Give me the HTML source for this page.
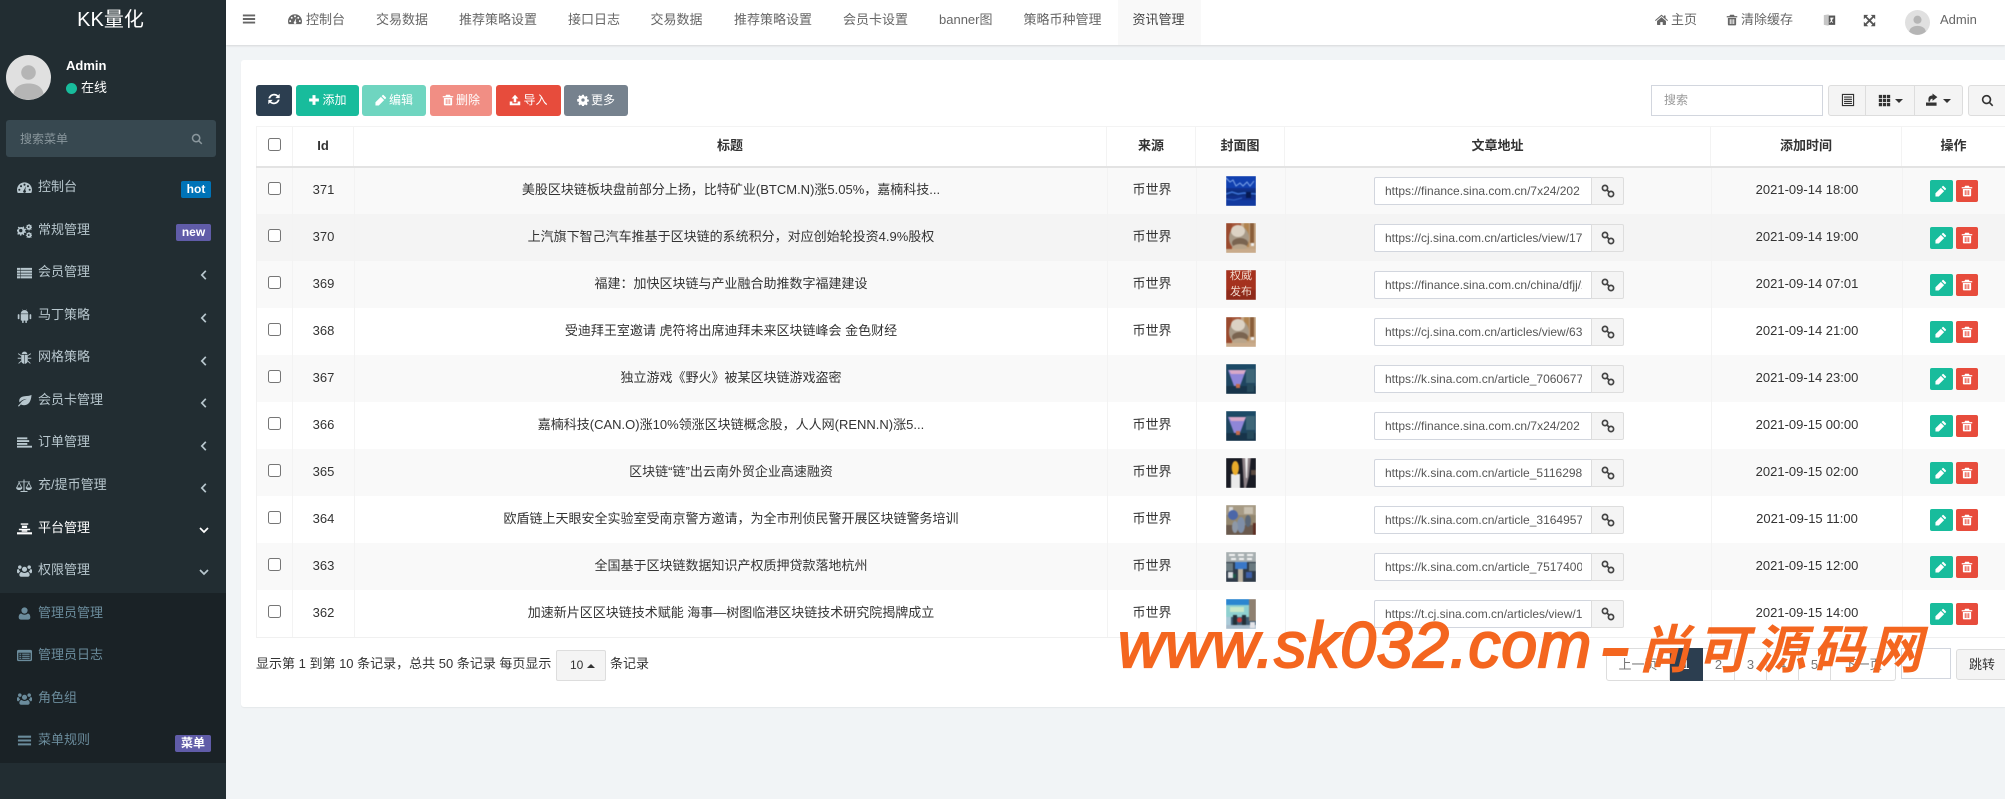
<!DOCTYPE html>
<html lang="zh"><head><meta charset="utf-8"><title>KK量化</title>
<style>
*{box-sizing:border-box}
html,body{margin:0;padding:0;width:2005px;height:799px;overflow:hidden;background:#f1f4f6}
body{font:13px/18px "Liberation Sans","Noto Sans CJK SC",sans-serif;color:#333;position:relative}
.a{position:absolute;white-space:nowrap}
svg{display:block;fill:currentColor}
#side{left:0;top:0;width:226px;height:799px;background:#222d32;color:#b8c7ce}
#sub{left:0;top:593px;width:226px;height:170px;background:#1a2226}
.m{left:38px;height:18px;line-height:18px;color:#b8c7ce}
.s{color:#6b8c9c}
.ic{width:15px;height:15px;left:16.5px;color:#b8c7ce}
.ic.s{color:#6b8c9c}
.ch{left:198px;width:12px;height:12px;color:#b8c7ce}
.bd{color:#fff;font-weight:bold;font-size:12px;text-align:center;border-radius:2px;height:17px;line-height:16px}
#top{left:226px;top:0;width:1779px;height:45px;background:#fff;box-shadow:0 1px 2px rgba(0,0,0,.12)}
.n{top:11px;color:#666;line-height:18px}
.ni{color:#666}
#panel{left:241px;top:60px;width:1764px;height:647px;background:#fff;border-radius:3px 0 0 3px;box-shadow:0 1px 1px rgba(0,0,0,.05)}
.b{top:85px;height:31px;border-radius:3px;color:#fff;font-size:12px;line-height:30px;text-align:center}
.b svg{display:inline-block;width:12px;height:12px;vertical-align:-2px;margin-right:2px}
.tg{top:85px;height:31px;background:#f4f4f4;border:1px solid #ddd;color:#333}
.r{position:absolute;left:256px;width:1749px;height:47px;border-left:1px solid #f1f1f1}
.c{position:absolute;top:0;height:47px;line-height:46px;text-align:center;white-space:nowrap;border-right:1px solid #f3f3f3}
.c1{left:0;width:36px}.c2{left:36px;width:62px}.c3{left:98px;width:753px}.c4{left:851px;width:89px}.c5{left:940px;width:89px}.c6{left:1029px;width:426px}.c7{left:1455px;width:191px}.c8{left:1646px;width:103px;border-right:0}
input[type=checkbox]{position:absolute;margin:0;left:11px;top:15px;width:13px;height:13px}
.th{position:absolute;left:969px;top:9px;width:30px;height:30px;overflow:hidden}
.th svg{filter:blur(.45px)}
.u{position:absolute;left:1117px;top:10px;width:218px;height:28px;border:1px solid #d2d6de;border-radius:2px 0 0 2px;background:#fff;font-size:12px;line-height:26px;color:#555;padding:0 10px;overflow:hidden;white-space:nowrap;text-align:left}
.u span{display:block;width:197px;overflow:hidden}
.l{position:absolute;left:1334px;top:10px;width:33px;height:28px;border:1px solid #ddd;border-radius:0 2px 2px 0;background:#f4f4f4;color:#444}
.l svg{position:absolute;left:9px;top:6px;width:14px;height:14px}
.e,.d{position:absolute;top:13px;height:22px;border-radius:2px;color:#fff}
.e{left:1673px;width:23px;background:#18bc9c}.d{left:1699px;width:22px;background:#e74c3c}
.e svg,.d svg{position:absolute;left:5px;top:5px;width:12px;height:12px}
.hd{position:absolute;top:127px;height:39px;line-height:38px;font-weight:bold;text-align:center;color:#333;white-space:nowrap;border-right:1px solid #f3f3f3}
.pg{top:648px;height:33px;line-height:31px;text-align:center;background:#fff;border:1px solid #ddd;border-left:0;color:#777}
.wm{color:#f4661f;font-style:italic;white-space:nowrap;position:absolute}
</style></head><body>
<svg width="0" height="0" style="position:absolute"><defs>
<symbol id="dash" viewBox="0 0 16 16"><path fill-rule="evenodd" d="M8 2.5C3.600 2.500 0 6 0 10.500c0 1.200.3 2.300.8 3.300h14.400c.5-1 .8-2.100.8-3.300C16 6 12.400 2.500 8 2.500zM2.500 9.300a1.100 1.100 0 1 1 0 2.200 1.100 1.100 0 0 1 0-2.200zM4.300 5.500a1.100 1.100 0 1 1 0 2.200 1.100 1.100 0 0 1 0-2.200zM8 3.900a1.100 1.100 0 1 1 0 2.200 1.100 1.100 0 0 1 0-2.200zM11.700 5.500a1.100 1.100 0 1 1 0 2.200 1.100 1.100 0 0 1 0-2.200zM13.500 9.300a1.100 1.100 0 1 1 0 2.200 1.100 1.100 0 0 1 0-2.200zM9.500 6.600l-.7 4.300a1.500 1.500 0 1 1-1.500 0z"/></symbol>
<symbol id="cogs" viewBox="0 0 16 16"><path fill-rule="evenodd" d="M4.800 4.300l1.100.3.700-1 1.200.7-.5 1.100.8.800 1.100-.4.600 1.300-1.100.6v1.100l1.100.6-.6 1.300-1.100-.4-.8.8.5 1.100-1.200.7-.7-1-1.100.3-.2 1.200H3.300l-.2-1.200-1-.4-1 .8-.9-1 .8-1-.4-1L0 8.400V7l1.200-.2.4-1-.8-1 1-1 1 .8zM4 6.300a1.800 1.800 0 1 0 0 3.600 1.800 1.800 0 0 0 0-3.600z"/><path fill-rule="evenodd" d="M12.500 1l.8.100.2.900.7.300.8-.5.6.6-.5.8.3.700.9.200v.9l-.9.2-.3.700.5.800-.6.600-.8-.5-.7.300-.2.900h-.9l-.2-.9-.7-.3-.8.5-.6-.6.5-.8-.3-.7-.9-.2v-.9l.9-.2.3-.7-.5-.8.6-.6.8.5.7-.3.2-.9zM12.500 3.300a1 1 0 1 0 0 2 1 1 0 0 0 0-2zM12.500 9.500l.8.100.2.900.7.300.8-.5.6.6-.5.8.3.700.9.200v.9l-.9.2-.3.700.5.800-.6.600-.8-.5-.7.300-.2.900h-.9l-.2-.9-.7-.3-.8.5-.6-.6.5-.8-.3-.7-.9-.2v-.9l.9-.2.3-.7-.5-.8.6-.6.8.5.7-.3.2-.9zM12.500 11.800a1 1 0 1 0 0 2 1 1 0 0 0 0-2z"/></symbol>
<symbol id="list" viewBox="0 0 16 16"><path d="M0 3h3.500v2.200H0zM4 3h12v2.200H4zM0 6h3.500v2.200H0zM4 6h12v2.200H4zM0 9h3.500v2.200H0zM4 9h12v2.200H4zM0 12h3.500v2.200H0zM4 12h12v2.200H4z"/></symbol>
<symbol id="android" viewBox="0 0 16 16"><path d="M4 6.500h8v6.200c0 .5-.3.8-.8.8h-.7v2c0 .4-.4.5-.8.500s-.8-.1-.8-.5v-2H7.100v2c0 .4-.4.5-.8.500s-.8-.1-.8-.5v-2h-.7c-.5 0-.8-.3-.8-.8zM4 6c0-1.500 1-2.700 2.300-3.300L5.600 1.500l.3-.2.8 1.200c.8-.3 1.800-.3 2.600 0l.8-1.200.3.200-.7 1.200C11 3.300 12 4.500 12 6zM1.700 6.500c.5 0 .9.400.9.900v3.700c0 .5-.4.900-.9.900s-.9-.4-.9-.9V7.400c0-.5.400-.9.900-.9zM14.300 6.500c.5 0 .9.400.9.900v3.700c0 .5-.4.900-.9.900s-.9-.4-.9-.9V7.400c0-.5.400-.9.900-.9z"/></symbol>
<symbol id="bug" viewBox="0 0 16 16"><path d="M5 4.200C5.300 2.700 6.500 1.700 8 1.700s2.700 1 3 2.500zM4.500 5h3.200v9.800C5.800 14.500 4.500 13 4.500 11zM8.300 5h3.200v6c0 2-1.300 3.500-3.200 3.800zM1.500 3.500l3 2-.5.700-3-2zM14.500 3.500l-3 2 .5.700 3-2zM.8 8.300h3.500v1H.8zM11.700 8.300h3.500v1h-3.500zM4.200 11.500l.5.700-2.700 2.500-.6-.7zM11.800 11.500l-.5.700 2.700 2.500.6-.7z"/></symbol>
<symbol id="leaf" viewBox="0 0 16 16"><path d="M15.500 2C15 9 12.500 13 7.500 13c-1.300 0-2.500-.3-3.300-.9L2 14.500 1 13.700l2.500-2.700C5 8.500 7.500 7 10.500 6.200 7 6.500 4.500 8 2.700 10 1.500 6.500 3.700 3.700 8 3.400c3-.2 5.500-.4 7.500-1.400z"/></symbol>
<symbol id="order" viewBox="0 0 16 16"><path d="M0 2.500h11v2H0zM0 5.500h13v2H0zM0 8.500h11v2H0zM0 11.500h16v2H0z"/></symbol>
<symbol id="scale" viewBox="0 0 16 16"><path d="M7.500 1.500h1v11.500h3v1h-7v-1h3zM2 3.500h12v.8H2z"/><path d="M3.200 3.800l2.900 5.800h-.9L3.200 5.500 1.200 9.600H.3zM12.800 3.800l2.900 5.800h-.9l-2-4.100-2 4.100h-.9z"/><path d="M0 9.500h6.400C6.200 11 5 12 3.200 12S.2 11 0 9.500zM9.600 9.500H16c-.2 1.500-1.400 2.500-3.200 2.500s-3-1-3.200-2.500z"/></symbol>
<symbol id="plat" viewBox="0 0 16 16"><path d="M4 2.500h8v1.500H4zM5.200 4.900h5.600v2.600H5.200zM2 8.300h12v1.500H2zM0 12h16v2.200H0zM5 10h6v1.500H5z"/></symbol>
<symbol id="users" viewBox="0 0 16 16"><path d="M8 4a2.700 2.700 0 1 1 0 5.400A2.700 2.700 0 0 1 8 4zM3 2.500a1.900 1.900 0 1 1 0 3.800 1.900 1.900 0 0 1 0-3.800zM13 2.500a1.900 1.900 0 1 1 0 3.800 1.900 1.900 0 0 1 0-3.800zM0 7.300C0 6.500 1.500 6.500 2.200 6.800c.1 1 .6 1.900 1.300 2.500C2.500 9.700 1.800 10.500 1.500 11 .5 11 0 10.500 0 9.500zM16 7.300c0-.8-1.500-.8-2.200-.5-.1 1-.6 1.900-1.300 2.500 1 .4 1.700 1.200 2 1.700 1 0 1.500-.5 1.500-1.500zM5 9.600c.8.700 1.800 1 3 1s2.200-.3 3-1c1.500.2 2.500 1.200 2.500 3 0 1.300-.8 2-2 2h-7c-1.200 0-2-.7-2-2 0-1.800 1-2.800 2.500-3z"/></symbol>
<symbol id="user" viewBox="0 0 16 16"><path d="M8 1.500a3.300 3.300 0 1 1 0 6.600 3.300 3.300 0 0 1 0-6.600zM4.500 8c.9.800 2.100 1.300 3.500 1.300s2.600-.5 3.500-1.300c1.800.2 2.700 1.800 2.700 4 0 1.500-.9 2.500-2.300 2.500H4.100c-1.400 0-2.300-1-2.300-2.500 0-2.200.9-3.800 2.700-4z"/></symbol>
<symbol id="alt" viewBox="0 0 16 16"><path fill-rule="evenodd" d="M1.500 2h13c.8 0 1.500.7 1.500 1.500v9c0 .8-.7 1.500-1.500 1.500h-13C.7 14 0 13.300 0 12.500v-9C0 2.700.7 2 1.500 2zM1.500 5v7.500h13V5zM2.500 6h2v1.200h-2zM5.500 6h8v1.200h-8zM2.500 8.200h2v1.200h-2zM5.500 8.200h8v1.200h-8zM2.500 10.400h2v1.200h-2zM5.500 10.400h8v1.200h-8z"/></symbol>
<symbol id="bars" viewBox="0 0 16 16"><path d="M1 2.800h14v2.200H1zM1 6.900h14v2.200H1zM1 11h14v2.200H1z"/></symbol>
<symbol id="left" viewBox="0 0 12 12"><path d="M7.800 1.800L3.800 6l4 4.200" fill="none" stroke="currentColor" stroke-width="1.700"/></symbol>
<symbol id="down" viewBox="0 0 12 12"><path d="M2 4l4 4 4-4" fill="none" stroke="currentColor" stroke-width="1.700"/></symbol>
<symbol id="search" viewBox="0 0 16 16"><path fill-rule="evenodd" d="M6.800 1a5.800 5.800 0 0 1 4.700 9.200l3.600 3.600-1.400 1.400-3.600-3.600A5.800 5.800 0 1 1 6.800 1zM6.800 3a3.800 3.800 0 1 0 0 7.600 3.800 3.800 0 0 0 0-7.600z"/></symbol>
<symbol id="refresh" viewBox="0 0 16 16"><path d="M14.500 2v5h-5l1.800-1.800C10.400 4.400 9.300 4 8.100 4 6 4 4.300 5.300 3.700 7.300H1.600C2.300 4.200 5 2 8.100 2c1.800 0 3.400.7 4.600 1.800zM1.500 14V9h5l-1.800 1.800c.9.8 2 1.200 3.200 1.200 2.100 0 3.800-1.300 4.400-3.300h2.100C13.700 11.800 11 14 7.900 14c-1.800 0-3.400-.7-4.600-1.800z"/></symbol>
<symbol id="plus" viewBox="0 0 16 16"><path d="M6 1.500h4v4.500h4.500v4H10v4.500H6V10H1.500V6H6z"/></symbol>
<symbol id="pen" viewBox="0 0 16 16"><path d="M11.500 1.500l3 3c.4.4.4 1 0 1.400l-1.300 1.300-4.400-4.400 1.300-1.300c.4-.4 1-.4 1.400 0zM7.800 3.800l4.400 4.400-7.200 7.200H.6V11z"/></symbol>
<symbol id="trash" viewBox="0 0 16 16"><path fill-rule="evenodd" d="M5.500 1h5l1 1.800H15V4.500H1V2.800h3.500zM2.500 5.300h11v8.500c0 .8-.6 1.400-1.400 1.400H3.900c-.8 0-1.400-.6-1.400-1.400zM5 7v6.300h1.300V7zM7.400 7v6.300h1.200V7zM9.700 7v6.300H11V7z"/></symbol>
<symbol id="upload" viewBox="0 0 16 16"><path d="M8 1l4.500 5H9.700v5H6.300V6H3.500zM1 10h3.500v2.500h7V10H15v5H1z"/></symbol>
<symbol id="cog" viewBox="0 0 16 16"><path fill-rule="evenodd" d="M6.800 1h2.400l.4 2 1.300.6 1.700-1.100 1.700 1.700-1.100 1.700.6 1.300 2 .4v2.400l-2 .4-.6 1.300 1.100 1.700-1.700 1.700-1.700-1.100-1.300.6-.4 2H6.800l-.4-2-1.300-.6-1.700 1.100-1.700-1.700 1.100-1.700-.6-1.300-2-.4V6.800l2-.4.6-1.300-1.100-1.700 1.700-1.700 1.700 1.100 1.300-.6zM8 5.800a2.200 2.200 0 1 0 0 4.400 2.200 2.200 0 0 0 0-4.400z"/></symbol>
<symbol id="home" viewBox="0 0 16 16"><path d="M8 2l3 2.600V3h2v3.300l3 2.600-.8 1L8 3.700.8 9.900 0 8.900zM8 5l5.500 4.800V14c0 .4-.3.700-.7.700H9.500v-3.500h-3v3.500H3.200c-.4 0-.7-.3-.7-.7V9.800z"/></symbol>
<symbol id="exp" viewBox="0 0 16 16"><path d="M1 1h5.500L4.500 3l3.500 3.300L11.500 3l-2-2H15v5.500l-2-2-3.300 3.500 3.300 3.500 2-2V15H9.500l2-2L8 9.700 4.500 13l2 2H1V9.500l2 2L6.300 8 3 4.500l-2 2z"/></symbol>
<symbol id="link" viewBox="0 0 14 14"><g fill="none" stroke="currentColor" stroke-width="1.700"><circle cx="4" cy="4" r="2.600"/><circle cx="10" cy="10" r="2.600"/><path d="M5.500 5.500l3 3"/></g></symbol>
<symbol id="th" viewBox="0 0 16 16"><path d="M1 1h4v4H1zM6 1h4v4H6zM11 1h4v4h-4zM1 6h4v4H1zM6 6h4v4H6zM11 6h4v4h-4zM1 11h4v4H1zM6 11h4v4H6zM11 11h4v4h-4z"/></symbol>
<symbol id="tbl" viewBox="0 0 16 16"><path fill-rule="evenodd" d="M1 1h14v14H1zM2.300 2.300v11.400h11.400V2.300zM3.500 4h9v1.300h-9zM3.500 6.500h9v1.300h-9zM3.500 9h9v1.300h-9zM3.500 11.300h9v1.200h-9z"/></symbol>
<symbol id="exportb" viewBox="0 0 16 16"><path d="M0 11h13v4H0zM3 10V7c0-3 2-4.500 5-4.500V0l6 4.500L8 9V6.500c-2 0-3 1-3 3.500z"/></symbol>
<symbol id="tr" viewBox="0 0 16 16"><path d="M1 2l6-1v14l-6-1z" fill="#c6c6c6"/><path d="M7 2.500h8V14H7z" fill="#555"/><path d="M9 5h4v1.200h-.9l-1.100 3 1.600 1.500-.7.800L10.300 10 8.700 11.500 8 10.700l1.700-1.500-.7-3z" fill="#fff"/></symbol>
<symbol id="av" viewBox="0 0 45 45"><circle cx="22.500" cy="22.500" r="22.500" fill="#e0e0e0"/><circle cx="22.500" cy="17.500" r="7.300" fill="#b5b5b5"/><path d="M7.500 39c1-7 7-10.500 15-10.500S36.500 32 37.500 39a22.500 22.500 0 0 1-30 0z" fill="#b5b5b5"/></symbol>
<symbol id="t1" viewBox="0 0 30 30"><rect x="-2" y="-2" width="34" height="34" fill="#10308e"/><rect x="-2" y="-2" width="34" height="14" fill="#1140b0"/><rect x="-2" y="14" width="34" height="6" fill="#0d2f80"/><rect x="-2" y="24" width="34" height="8" fill="#123aa0"/><path d="M0 2l4 4 3-2 3 6 4-3 3 3 4-4 3 4 4-5" fill="none" stroke="#7fa6ea" stroke-width="1"/><path d="M0 18l6-2 6 2 6-1 12 1" fill="none" stroke="#3f76d8" stroke-width="1.500"/><path d="M0 23l8 1 8-2" fill="none" stroke="#3568c8" stroke-width="1"/><rect x="20" y="16" width="5" height="6" fill="#071a52"/></symbol>
<symbol id="t2" viewBox="0 0 30 30"><rect x="-2" y="-2" width="34" height="34" fill="#c4a583"/><rect x="-2" y="-2" width="17" height="18" fill="#a3563a"/><rect x="-2" y="-2" width="8" height="34" fill="#9a4a2e"/><rect x="18" y="-2" width="5" height="26" fill="#b0834f"/><rect x="24" y="-2" width="4" height="22" fill="#8a5e3a"/><ellipse cx="13" cy="15" rx="10" ry="12" fill="#a89a88"/><ellipse cx="12" cy="8" rx="7" ry="6" fill="#dcd2c4"/><ellipse cx="14" cy="20" rx="8" ry="5" fill="#7a6450"/><ellipse cx="14" cy="24" rx="7" ry="3" fill="#b9a48a"/><rect x="25" y="20" width="3" height="3" fill="#eee"/><rect x="-2" y="26" width="34" height="6" fill="#c9ab8b"/></symbol>
<symbol id="t3" viewBox="0 0 30 30"><rect x="-2" y="-2" width="34" height="34" fill="#a5321e"/><rect x="-2" y="20" width="34" height="12" fill="#8f2a1a"/></symbol>
<symbol id="t5" viewBox="0 0 30 30"><rect x="-2" y="-2" width="34" height="34" fill="#1e4560"/><rect x="-2" y="-2" width="34" height="7" fill="#1c4a66"/><path d="M2 6h18l-6 16H8z" fill="#8f86d8"/><path d="M3 6h17l-2 4H5z" fill="#d8a8c8"/><rect x="20" y="5" width="9" height="14" fill="#3e6678"/><rect x="-2" y="22" width="34" height="10" fill="#17344a"/><rect x="10" y="20" width="4" height="4" fill="#c26a4a"/><rect x="21" y="20" width="7" height="8" fill="#264a5c"/></symbol>
<symbol id="t7" viewBox="0 0 30 30"><rect x="-2" y="-2" width="34" height="34" fill="#191b24"/><path d="M16-2h9l-2 20-3 12h-2z" fill="#8a7f84"/><path d="M19-2h3l-1 22h-1z" fill="#eee"/><rect x="25" y="12" width="7" height="5" fill="#5a4a40"/><rect x="5" y="16" width="9" height="16" fill="#eaeaea"/><ellipse cx="9.300" cy="10" rx="3.600" ry="7" fill="#e9ab2a"/></symbol>
<symbol id="t8" viewBox="0 0 30 30"><rect x="-2" y="-2" width="34" height="34" fill="#93876f"/><rect x="-2" y="-2" width="34" height="12" fill="#a69a84"/><rect x="3" y="2" width="4" height="10" fill="#d8d8d8"/><ellipse cx="7" cy="10" rx="5" ry="5" fill="#4b66a8"/><rect x="18" y="2" width="9" height="7" fill="#c8c0b0"/><rect x="-2" y="20" width="34" height="12" fill="#6a5a4e"/><ellipse cx="15" cy="20" rx="4" ry="8" fill="#7f8fa8"/><ellipse cx="9" cy="22" rx="3" ry="6" fill="#8e98a6"/><ellipse cx="22" cy="16" rx="3" ry="6" fill="#5c6878"/><rect x="27" y="18" width="4" height="14" fill="#5e2e22"/></symbol>
<symbol id="t9" viewBox="0 0 30 30"><rect x="-2" y="-2" width="34" height="34" fill="#2e3a48"/><rect x="-2" y="-2" width="34" height="12" fill="#a6aeb0"/><path d="M3 3h6M12 3h6M21 3h6M5 7h5M13 7h5M21 7h5" stroke="#f4f4f4" stroke-width="2"/><rect x="9" y="10" width="12" height="7" fill="#3a78c8"/><rect x="-2" y="11" width="9" height="8" fill="#6a7a80"/><rect x="23" y="11" width="9" height="8" fill="#6a7a80"/><rect x="12" y="17" width="5" height="15" fill="#b8b0a0"/><rect x="2" y="20" width="5" height="6" fill="#d8dce0"/><rect x="20" y="20" width="6" height="6" fill="#3d5fa8"/><rect x="7" y="22" width="3" height="4" fill="#1f5a4a"/></symbol>
<symbol id="t10" viewBox="0 0 30 30"><rect x="-2" y="-2" width="34" height="34" fill="#3c5a70"/><rect x="-2" y="-2" width="25" height="8" fill="#2b86d0"/><rect x="23" y="-2" width="9" height="24" fill="#8e8070"/><rect x="-2" y="6" width="25" height="12" fill="#8fd0d0"/><rect x="4" y="8" width="14" height="5" fill="#c8e8c8"/><rect x="7" y="16" width="4" height="12" fill="#233038"/><rect x="16" y="16" width="4" height="12" fill="#233038"/><circle cx="13.500" cy="21" r="2.500" fill="#c83a3a"/><rect x="-2" y="18" width="7" height="8" fill="#aacad8"/><rect x="-2" y="26" width="34" height="6" fill="#a8bccc"/><rect x="24" y="23" width="5" height="6" fill="#e4e4e8"/></symbol>
</defs></svg>

<div id="side" class="a"></div>
<div class="a" style="left:0;top:7px;width:221px;text-align:center;color:#fff;font-size:20px;line-height:26px;">KK量化</div>
<svg class="a" style="left:6px;top:55px" width="45" height="45"><use href="#av"/></svg>
<div class="a" style="left:66px;top:57px;color:#fff;font-weight:bold;">Admin</div>
<div class="a" style="left:66px;top:82.500px;width:11px;height:11px;border-radius:50%;background:#18bc9c"></div>
<div class="a" style="left:81px;top:79px;color:#fff;">在线</div>
<div class="a" style="left:6px;top:120px;width:210px;height:37px;background:#374850;border-radius:3px"></div>
<div class="a" style="left:20px;top:130px;font-size:12px;color:#8a979d;">搜索菜单</div>
<svg class="a" style="left:191px;top:133px;color:#8a979d" width="12" height="12"><use href="#search"/></svg>

<svg class="a ic" style="top:180px"><use href="#dash"/></svg><div class="a m" style="top:178px">控制台</div>
<div class="a bd" style="left:181px;top:181px;width:30px;background:#0073b7">hot</div>
<svg class="a ic" style="top:223px"><use href="#cogs"/></svg><div class="a m" style="top:221px">常规管理</div>
<div class="a bd" style="left:176px;top:224px;width:35px;background:#605ca8">new</div>
<svg class="a ic" style="top:265px"><use href="#list"/></svg><div class="a m" style="top:263px">会员管理</div>
<svg class="a ch" style="top:269px;left:198px"><use href="#left"/></svg>
<svg class="a ic" style="top:308px"><use href="#android"/></svg><div class="a m" style="top:306px">马丁策略</div>
<svg class="a ch" style="top:312px"><use href="#left"/></svg>
<svg class="a ic" style="top:350px"><use href="#bug"/></svg><div class="a m" style="top:348px">网格策略</div>
<svg class="a ch" style="top:355px"><use href="#left"/></svg>
<svg class="a ic" style="top:393px"><use href="#leaf"/></svg><div class="a m" style="top:391px">会员卡管理</div>
<svg class="a ch" style="top:397px"><use href="#left"/></svg>
<svg class="a ic" style="top:435px"><use href="#order"/></svg><div class="a m" style="top:433px">订单管理</div>
<svg class="a ch" style="top:440px"><use href="#left"/></svg>
<svg class="a ic" style="top:478px;left:16px;width:16px;height:16px"><use href="#scale"/></svg><div class="a m" style="top:476px">充/提币管理</div>
<svg class="a ch" style="top:482px"><use href="#left"/></svg>
<svg class="a ic" style="top:521px;color:#fff"><use href="#plat"/></svg><div class="a m" style="top:519px;color:#fff">平台管理</div>
<svg class="a ch" style="top:524px;color:#fff"><use href="#down"/></svg>
<svg class="a ic" style="top:563px"><use href="#users"/></svg><div class="a m" style="top:561px">权限管理</div>
<svg class="a ch" style="top:566px"><use href="#down"/></svg>
<div id="sub" class="a"></div>
<svg class="a ic s" style="top:606px"><use href="#user"/></svg><div class="a m s" style="top:604px">管理员管理</div>
<svg class="a ic s" style="top:648px"><use href="#alt"/></svg><div class="a m s" style="top:646px">管理员日志</div>
<svg class="a ic s" style="top:691px"><use href="#users"/></svg><div class="a m s" style="top:689px">角色组</div>
<svg class="a ic s" style="top:733px"><use href="#bars"/></svg><div class="a m s" style="top:731px">菜单规则</div>
<div class="a bd" style="left:175px;top:735px;width:36px;background:#605ca8">菜单</div>

<div id="top" class="a"></div>
<svg class="a ni" style="left:242px;top:12px" width="14" height="14"><use href="#bars"/></svg>
<svg class="a ni" style="left:287.500px;top:12px" width="14" height="14"><use href="#dash"/></svg>
<div class="a n" style="left:306px">控制台</div>
<div class="a n" style="left:376px">交易数据</div>
<div class="a n" style="left:459px">推荐策略设置</div>
<div class="a n" style="left:568px">接口日志</div>
<div class="a n" style="left:650.500px">交易数据</div>
<div class="a n" style="left:734px">推荐策略设置</div>
<div class="a n" style="left:843px">会员卡设置</div>
<div class="a n" style="left:939px">banner图</div>
<div class="a n" style="left:1023.500px">策略币种管理</div>
<div class="a" style="left:1118px;top:0;width:83px;height:45px;background:#f9f9f9"></div>
<div class="a n" style="left:1132.500px;color:#444">资讯管理</div>
<svg class="a ni" style="left:1654.500px;top:13px" width="13" height="13"><use href="#home"/></svg><div class="a n" style="left:1671px">主页</div>
<svg class="a ni" style="left:1726px;top:14px" width="12" height="12"><use href="#trash"/></svg><div class="a n" style="left:1741px">清除缓存</div>
<svg class="a" style="left:1822.500px;top:13px" width="13" height="14"><use href="#tr"/></svg>
<svg class="a ni" style="left:1863px;top:14px;color:#555" width="13" height="13"><use href="#exp"/></svg>
<svg class="a" style="left:1905px;top:10px" width="25" height="25"><use href="#av"/></svg>
<div class="a n" style="left:1940px">Admin</div>

<div id="panel" class="a"></div>
<div class="a b" style="left:256px;width:36px;background:#2c3e50"><svg style="margin:0;width:14px;height:14px"><use href="#refresh"/></svg></div>
<div class="a b" style="left:296px;width:63px;background:#18bc9c"><svg><use href="#plus"/></svg>添加</div>
<div class="a b" style="left:362px;width:64px;background:#6fd5c0"><svg><use href="#pen"/></svg>编辑</div>
<div class="a b" style="left:430px;width:62px;background:#f18e84"><svg><use href="#trash"/></svg>删除</div>
<div class="a b" style="left:496px;width:65px;background:#e74c3c"><svg><use href="#upload"/></svg>导入</div>
<div class="a b" style="left:564px;width:64px;background:#76828e"><svg><use href="#cog"/></svg>更多</div>

<div class="a" style="left:1651px;top:85px;width:172px;height:31px;background:#fff;border:1px solid #d2d6de;padding-left:12px;line-height:29px;font-size:12px;color:#999">搜索</div>
<div class="a tg" style="left:1828px;width:38px;border-radius:3px 0 0 3px"><svg class="a" style="left:12px;top:7px" width="14" height="14"><use href="#tbl"/></svg></div>
<div class="a tg" style="left:1865px;width:50px"><svg class="a" style="left:12px;top:8px" width="13" height="13"><use href="#th"/></svg><div class="a" style="left:29px;top:13px;border:4px solid transparent;border-top-color:#333;border-bottom:0"></div></div>
<div class="a tg" style="left:1914px;width:49px;border-radius:0 3px 3px 0"><svg class="a" style="left:11px;top:7px" width="13" height="14"><use href="#exportb"/></svg><div class="a" style="left:28px;top:13px;border:4px solid transparent;border-top-color:#333;border-bottom:0"></div></div>
<div class="a tg" style="left:1968px;width:45px;border-radius:3px 0 0 3px"><svg class="a" style="left:12px;top:8px" width="13" height="13"><use href="#search"/></svg></div>

<div class="a" style="left:256px;top:126px;width:1749px;height:1px;background:#f3f3f3"></div>
<div class="a" style="left:256px;top:127px;width:1px;height:40px;background:#f3f3f3"></div>
<div class="hd" style="left:256px;width:37px"><input type="checkbox" style="left:12px;top:11px"></div>
<div class="hd" style="left:293px;width:61px">Id</div>
<div class="hd" style="left:354px;width:753px">标题</div>
<div class="hd" style="left:1107px;width:89px">来源</div>
<div class="hd" style="left:1196px;width:89px">封面图</div>
<div class="hd" style="left:1285px;width:426px">文章地址</div>
<div class="hd" style="left:1711px;width:191px">添加时间</div>
<div class="hd" style="left:1902px;width:103px;border-right:0">操作</div>

<div class="r" style="top:167px;background:#f9f9f9"><input type="checkbox"><div class="c c2">371</div><div class="c c1"></div><div class="c c3">美股区块链板块盘前部分上扬，比特矿业(BTCM.N)涨5.05%，嘉楠科技...</div><div class="c c4">币世界</div><div class="c c5"></div><div class="th"><svg width="30" height="30"><use href="#t1"/></svg></div><div class="c c6"></div><div class="u"><span>https://finance.sina.com.cn/7x24/202</span></div><div class="l"><svg><use href="#link"/></svg></div><div class="c c7">2021-09-14 18:00</div><div class="c c8"></div><div class="e"><svg><use href="#pen"/></svg></div><div class="d"><svg><use href="#trash"/></svg></div></div>
<div class="a" style="left:256px;top:166px;width:1749px;height:2px;background:#e3e3e3"></div>

<div class="r" style="top:214px;background:#f4f4f4"><input type="checkbox"><div class="c c2">370</div><div class="c c1"></div><div class="c c3">上汽旗下智己汽车推基于区块链的系统积分，对应创始轮投资4.9%股权</div><div class="c c4">币世界</div><div class="c c5"></div><div class="th"><svg width="30" height="30"><use href="#t2"/></svg></div><div class="c c6"></div><div class="u"><span>https://cj.sina.com.cn/articles/view/1700000000</span></div><div class="l"><svg><use href="#link"/></svg></div><div class="c c7">2021-09-14 19:00</div><div class="c c8"></div><div class="e"><svg><use href="#pen"/></svg></div><div class="d"><svg><use href="#trash"/></svg></div></div>

<div class="r" style="top:261px;background:#f9f9f9"><input type="checkbox"><div class="c c2">369</div><div class="c c1"></div><div class="c c3">福建：加快区块链与产业融合助推数字福建建设</div><div class="c c4">币世界</div><div class="c c5"></div><div class="th"><svg width="30" height="30"><use href="#t3"/></svg><div style="position:absolute;left:0;top:-2px;width:30px;color:#f0d8cc;font-size:11px;line-height:16px;text-align:center">权威<br>发布</div></div><div class="c c6"></div><div class="u"><span>https://finance.sina.com.cn/china/dfjj/2021</span></div><div class="l"><svg><use href="#link"/></svg></div><div class="c c7">2021-09-14 07:01</div><div class="c c8"></div><div class="e"><svg><use href="#pen"/></svg></div><div class="d"><svg><use href="#trash"/></svg></div></div>

<div class="r" style="top:308px;background:#fff"><input type="checkbox"><div class="c c2">368</div><div class="c c1"></div><div class="c c3">受迪拜王室邀请 虎符将出席迪拜未来区块链峰会 金色财经</div><div class="c c4">币世界</div><div class="c c5"></div><div class="th"><svg width="30" height="30"><use href="#t2"/></svg></div><div class="c c6"></div><div class="u"><span>https://cj.sina.com.cn/articles/view/6300000000</span></div><div class="l"><svg><use href="#link"/></svg></div><div class="c c7">2021-09-14 21:00</div><div class="c c8"></div><div class="e"><svg><use href="#pen"/></svg></div><div class="d"><svg><use href="#trash"/></svg></div></div>

<div class="r" style="top:355px;background:#f9f9f9"><input type="checkbox"><div class="c c2">367</div><div class="c c1"></div><div class="c c3">独立游戏《野火》被某区块链游戏盗密</div><div class="c c4"></div><div class="c c5"></div><div class="th"><svg width="30" height="30"><use href="#t5"/></svg></div><div class="c c6"></div><div class="u"><span>https://k.sina.com.cn/article_7060677000</span></div><div class="l"><svg><use href="#link"/></svg></div><div class="c c7">2021-09-14 23:00</div><div class="c c8"></div><div class="e"><svg><use href="#pen"/></svg></div><div class="d"><svg><use href="#trash"/></svg></div></div>

<div class="r" style="top:402px;background:#fff"><input type="checkbox"><div class="c c2">366</div><div class="c c1"></div><div class="c c3">嘉楠科技(CAN.O)涨10%领涨区块链概念股，人人网(RENN.N)涨5...</div><div class="c c4">币世界</div><div class="c c5"></div><div class="th"><svg width="30" height="30"><use href="#t5"/></svg></div><div class="c c6"></div><div class="u"><span>https://finance.sina.com.cn/7x24/202</span></div><div class="l"><svg><use href="#link"/></svg></div><div class="c c7">2021-09-15 00:00</div><div class="c c8"></div><div class="e"><svg><use href="#pen"/></svg></div><div class="d"><svg><use href="#trash"/></svg></div></div>

<div class="r" style="top:449px;background:#f9f9f9"><input type="checkbox"><div class="c c2">365</div><div class="c c1"></div><div class="c c3">区块链“链”出云南外贸企业高速融资</div><div class="c c4">币世界</div><div class="c c5"></div><div class="th"><svg width="30" height="30"><use href="#t7"/></svg></div><div class="c c6"></div><div class="u"><span>https://k.sina.com.cn/article_5116298000</span></div><div class="l"><svg><use href="#link"/></svg></div><div class="c c7">2021-09-15 02:00</div><div class="c c8"></div><div class="e"><svg><use href="#pen"/></svg></div><div class="d"><svg><use href="#trash"/></svg></div></div>

<div class="r" style="top:496px;background:#fff"><input type="checkbox"><div class="c c2">364</div><div class="c c1"></div><div class="c c3">欧盾链上天眼安全实验室受南京警方邀请，为全市刑侦民警开展区块链警务培训</div><div class="c c4">币世界</div><div class="c c5"></div><div class="th"><svg width="30" height="30"><use href="#t8"/></svg></div><div class="c c6"></div><div class="u"><span>https://k.sina.com.cn/article_3164957000</span></div><div class="l"><svg><use href="#link"/></svg></div><div class="c c7">2021-09-15 11:00</div><div class="c c8"></div><div class="e"><svg><use href="#pen"/></svg></div><div class="d"><svg><use href="#trash"/></svg></div></div>

<div class="r" style="top:543px;background:#f9f9f9"><input type="checkbox"><div class="c c2">363</div><div class="c c1"></div><div class="c c3">全国基于区块链数据知识产权质押贷款落地杭州</div><div class="c c4">币世界</div><div class="c c5"></div><div class="th"><svg width="30" height="30"><use href="#t9"/></svg></div><div class="c c6"></div><div class="u"><span>https://k.sina.com.cn/article_7517400000</span></div><div class="l"><svg><use href="#link"/></svg></div><div class="c c7">2021-09-15 12:00</div><div class="c c8"></div><div class="e"><svg><use href="#pen"/></svg></div><div class="d"><svg><use href="#trash"/></svg></div></div>

<div class="r" style="top:590px;background:#fff"><input type="checkbox"><div class="c c2">362</div><div class="c c1"></div><div class="c c3">加速新片区区块链技术赋能 海事—树图临港区块链技术研究院揭牌成立</div><div class="c c4">币世界</div><div class="c c5"></div><div class="th"><svg width="30" height="30"><use href="#t10"/></svg></div><div class="c c6"></div><div class="u"><span>https://t.cj.sina.com.cn/articles/view/1000000000</span></div><div class="l"><svg><use href="#link"/></svg></div><div class="c c7">2021-09-15 14:00</div><div class="c c8"></div><div class="e"><svg><use href="#pen"/></svg></div><div class="d"><svg><use href="#trash"/></svg></div></div>
<div class="a" style="left:256px;top:637px;width:1749px;height:1px;background:#f0f0f0"></div>

<div class="a" style="left:256px;top:655px;">显示第 1 到第 10 条记录，总共 50 条记录 每页显示</div>
<div class="a" style="left:556px;top:650px;width:50px;height:31px;background:#f4f4f4;border:1px solid #ddd;border-radius:2px;line-height:29px;padding-left:13px;font-size:12px">10<span class="a" style="left:30px;top:13px;border:4px solid transparent;border-bottom-color:#333;border-top:0"></span></div>
<div class="a" style="left:610px;top:655px;">条记录</div>

<div class="a pg" style="left:1606px;width:64px;border-left:1px solid #ddd;border-radius:3px 0 0 3px">上一页</div>
<div class="a pg" style="left:1670px;width:33px;background:#2c3e50;border-color:#2c3e50;color:#fff">1</div>
<div class="a pg" style="left:1703px;width:32px">2</div>
<div class="a pg" style="left:1735px;width:32px">3</div>
<div class="a pg" style="left:1767px;width:32px">4</div>
<div class="a pg" style="left:1799px;width:32px">5</div>
<div class="a pg" style="left:1831px;width:65px;border-radius:0 3px 3px 0">下一页</div>
<div class="a" style="left:1901px;top:648px;width:50px;height:31px;background:#fff;border:1px solid #d2d6de"></div>
<div class="a" style="left:1956px;top:649px;width:55px;height:31px;background:#f4f4f4;border:1px solid #ddd;border-radius:3px;line-height:29px;padding-left:12px;color:#333">跳转</div>

<div class="wm" style="left:1118px;top:608px;font-family:'Liberation Sans',sans-serif;font-size:64px;line-height:74px;letter-spacing:.9px;-webkit-text-stroke:2.200px #f4661f">www.sk032.com</div>
<div class="a" style="left:1603px;top:648px;width:25px;height:8px;background:#f4661f;transform:skewX(-10deg)"></div>
<div class="wm" style="left:1638px;top:615px;font-size:52px;line-height:62px;letter-spacing:6px;font-weight:bold;font-family:'Noto Sans CJK SC',sans-serif">尚可源码网</div>
</body></html>
